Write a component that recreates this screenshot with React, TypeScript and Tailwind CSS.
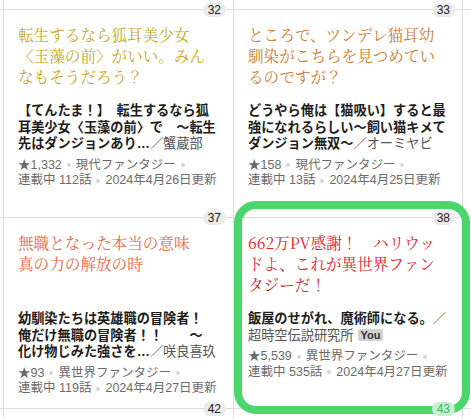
import { ReactNode } from 'react';

type Card = {
  no: number;
  title: string;
  color: string;
  desc: ReactNode;
  author: string;
  you?: boolean;
  stars: string;
  genre: string;
  eps: string;
  date: string;
};

const cards: Card[] = [
  {
    no: 32,
    title: '転生するなら狐耳美少女〈玉藻の前〉がいい。みんなもそうだろう？',
    color: 'text-[#c9a722]',
    desc: '【てんたま！】　転生するなら狐耳美少女〈玉藻の前〉で　～転生先はダンジョンあり…',
    author: '蟹蔵部',
    stars: '1,332',
    genre: '現代ファンタジー',
    eps: '112',
    date: '2024年4月26日',
  },
  {
    no: 33,
    title: 'ところで、ツンデレ猫耳幼馴染がこちらを見つめているのですが？',
    color: 'text-[#cc7d32]',
    desc: 'どうやら俺は【猫吸い】すると最強になれるらしい～飼い猫キメてダンジョン無双～',
    author: 'オーミヤビ',
    stars: '158',
    genre: '現代ファンタジー',
    eps: '13',
    date: '2024年4月25日',
  },
  {
    no: 37,
    title: '無職となった本当の意味　真の力の解放の時',
    color: 'text-[#f0653f]',
    desc: (
      <>
        幼馴染たちは英雄職の冒険者！　俺だけ無職の冒険者！！　　～
        <br />
        化け物じみた強さを…
      </>
    ),
    author: '咲良喜玖',
    stars: '93',
    genre: '異世界ファンタジー',
    eps: '119',
    date: '2024年4月27日',
  },
  {
    no: 38,
    title: '662万PV感謝！　ハリウッドよ、これが異世界ファンタジーだ！',
    color: 'text-[#e4212f]',
    desc: '飯屋のせがれ、魔術師になる。',
    author: '超時空伝説研究所',
    you: true,
    stars: '5,539',
    genre: '異世界ファンタジー',
    eps: '535',
    date: '2024年4月27日',
  },
];

function Badge({ n, covered }: { n: number; covered?: boolean }) {
  return (
    <span
      className={
        covered
          ? 'absolute -top-[7px] right-[7px] z-20 rounded-full bg-[#c9efd3] px-[5px] text-[12px] leading-[14px] text-[#3cb85e]'
          : 'absolute -top-[7px] right-[7px] rounded-full bg-[#ebebeb] px-[5px] text-[12px] leading-[14px] text-[#222]'
      }
    >
      {n}
    </span>
  );
}

function Sep() {
  return <span className="mx-[5px] inline-block h-[4px] w-[4px] rounded-full bg-[#d6d6d6] align-middle" />;
}

function CardCell({ card, right }: { card: Card; right?: boolean }) {
  return (
    <div className={`relative border-l border-[#ddd] px-[14px] pt-[14px] ${right ? 'border-r' : ''}`}>
      <Badge n={card.no} />
      <h3
        className={`min-h-[63px] font-['Noto_Serif_CJK_JP','Liberation_Serif','Noto_Sans_CJK_JP',serif] text-[15.6px] leading-[21px] ${card.color}`}
      >
        {card.title}
      </h3>
      <p className="mt-[16px] text-[13.2px] font-bold leading-[16.5px] text-[#1d1d1d]">
        {card.desc}
        <span className="font-normal text-[#555]">／{card.author}</span>
        {card.you && (
          <span className="ml-[4px] inline-block rounded-[2px] bg-[#d2d2d2] px-[3px] align-[1px] font-['Liberation_Sans',sans-serif] text-[11px] font-semibold leading-[12px] text-[#333]">
            You
          </span>
        )}
      </p>
      <div className="mt-[5px] text-[12.5px] leading-[15.5px] text-[#6b6b6b]">
        <span className="whitespace-nowrap">★{card.stars}<Sep /></span>
        <span className="whitespace-nowrap">{card.genre}<Sep /></span>
        <span className="whitespace-nowrap">連載中 {card.eps}話<Sep /></span>
        <span className="whitespace-nowrap">{card.date}更新</span>
      </div>
    </div>
  );
}

export default function App() {
  return (
    <div className="relative h-[419px] w-[471px] overflow-hidden bg-white font-['Liberation_Sans','Noto_Sans_CJK_JP',sans-serif]">
      <div className="h-[9px]">
        <div className="ml-[3px] grid h-full w-[460px] grid-cols-2">
          <div className="border-l border-[#ddd]" />
          <div className="border-x border-[#ddd]" />
        </div>
      </div>
      <div className="h-[208px] border-t border-[#ddd]">
        <div className="ml-[3px] grid h-full w-[460px] grid-cols-2">
          <CardCell card={cards[0]} />
          <CardCell card={cards[1]} right />
        </div>
      </div>
      <div className="h-[191px] border-t border-[#ddd]">
        <div className="ml-[3px] grid h-full w-[460px] grid-cols-2">
          <CardCell card={cards[2]} />
          <CardCell card={cards[3]} right />
        </div>
      </div>
      <div className="h-[200px] border-t border-[#ddd]">
        <div className="ml-[3px] grid h-full w-[460px] grid-cols-2">
          <div className="relative border-l border-[#ddd]">
            <Badge n={42} />
          </div>
          <div className="relative border-x border-[#ddd]">
            <Badge n={43} covered />
          </div>
        </div>
      </div>
      <div className="pointer-events-none absolute left-[234px] top-[201px] z-10 h-[213px] w-[236px] rounded-[22px] border-[8px] border-[#4ad66d]" />
    </div>
  );
}
